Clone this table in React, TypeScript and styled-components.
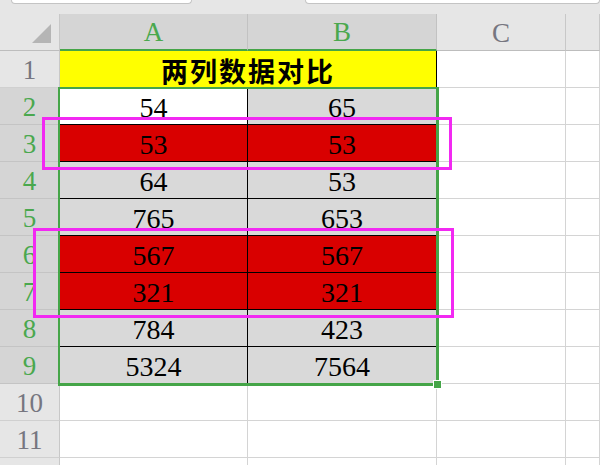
import React from "react";
import styled, { createGlobalStyle, css } from "styled-components";

const GlobalStyle = createGlobalStyle`
  html, body { margin: 0; padding: 0; background: #ffffff; }
  body { overflow: hidden; }
`;

const GREEN = "#45a548";
const MAGENTA = "#f229f2";

const Page = styled.div`
  position: relative;
  width: 600px;
  height: 465px;
  overflow: hidden;
  background: #ffffff;
  font-family: "Liberation Serif", "Noto Sans CJK SC", serif;
`;

const TopBar = styled.div`
  height: 14px;
  background: #e6e6e6;
  display: flex;
  align-items: flex-start;
  gap: 113px;
  padding-left: 11px;
  box-sizing: border-box;
`;

const FieldBox = styled.div<{ $w: number }>`
  width: ${(p) => p.$w}px;
  height: 3px;
  background: #ffffff;
  border: 1px solid #c4c4c4;
  border-top: none;
  border-radius: 0 0 5px 5px;
`;

const Sheet = styled.div`
  display: grid;
  grid-template-columns: 60px 188px 189px 129px 1fr;
  grid-auto-rows: 37px;
`;

const Corner = styled.div`
  position: relative;
  background: #e6e6e6;
  border-right: 1px solid #c8c8c8;
  border-bottom: 1px solid #bdbdbd;
  box-sizing: border-box;
  &::after {
    content: "";
    position: absolute;
    left: 32px;
    top: 10px;
    width: 19px;
    height: 19px;
    background: #b5b5b5;
    clip-path: polygon(100% 0, 100% 100%, 0 100%);
  }
`;

const headerText = css`
  display: flex;
  align-items: center;
  justify-content: center;
  font-family: "Liberation Serif", serif;
  font-size: 27px;
  box-sizing: border-box;
`;

const ColHeader = styled.div<{ $sel?: boolean }>`
  ${headerText}
  padding-top: 2px;
  background: ${(p) => (p.$sel ? "#d5d5d5" : "#e6e6e6")};
  color: ${(p) => (p.$sel ? "#4aa84e" : "#767680")};
  border-right: 1px solid ${(p) => (p.$sel ? "#c2c2c2" : "#c8c8c8")};
  border-bottom: ${(p) => (p.$sel ? `2px solid ${GREEN}` : "1px solid #bdbdbd")};
`;

const RowHeader = styled.div<{ $sel?: boolean }>`
  ${headerText}
  padding-top: 3px;
  background: ${(p) => (p.$sel ? "#d5d5d5" : "#e6e6e6")};
  color: ${(p) => (p.$sel ? "#4aa84e" : "#767680")};
  border-right: 1px solid #c8c8c8;
  border-bottom: 1px solid ${(p) => (p.$sel ? "#c4c4c4" : "#d0d0d0")};
`;

const Cell = styled.div<{ $fill?: string; $dark?: boolean }>`
  display: flex;
  align-items: center;
  justify-content: center;
  padding-top: 4px;
  box-sizing: border-box;
  font-size: 28px;
  color: #000000;
  background: ${(p) => p.$fill || "#ffffff"};
  border-right: 1px solid ${(p) => (p.$dark ? "#000000" : "#d4d4d4")};
  border-bottom: 1px solid ${(p) => (p.$dark ? "#000000" : "#d4d4d4")};
`;

const TitleCell = styled.div`
  grid-column: span 2;
  display: flex;
  align-items: center;
  justify-content: center;
  box-sizing: border-box;
  background: #ffff00;
  border-right: 1px solid #000000;
  font-family: "Noto Sans CJK SC", sans-serif;
  font-weight: 700;
  font-size: 27px;
  letter-spacing: 2px;
  padding-top: 1px;
  color: #000000;
`;

const Overlay = styled.div<{ $l: number; $t: number; $w: number; $h: number }>`
  position: absolute;
  left: ${(p) => p.$l}px;
  top: ${(p) => p.$t}px;
  width: ${(p) => p.$w}px;
  height: ${(p) => p.$h}px;
  box-sizing: border-box;
  pointer-events: none;
`;

const Selection = styled(Overlay)`
  border: 2px solid ${GREEN};
  border-right-width: 3px;
  border-bottom-width: 3px;
`;

const FillHandle = styled(Overlay)`
  background: ${GREEN};
  border: 1px solid #ffffff;
`;

const Highlight = styled(Overlay)`
  border: 3px solid ${MAGENTA};
`;

type Row = { a: string; b: string; red?: boolean };

const rows: Row[] = [
  { a: "54", b: "65" },
  { a: "53", b: "53", red: true },
  { a: "64", b: "53" },
  { a: "765", b: "653" },
  { a: "567", b: "567", red: true },
  { a: "321", b: "321", red: true },
  { a: "784", b: "423" },
  { a: "5324", b: "7564" },
];

export default function App() {
  return (
    <Page>
      <GlobalStyle />
      <TopBar>
        <FieldBox $w={184} />
        <FieldBox $w={300} />
      </TopBar>
      <Sheet>
        <Corner />
        <ColHeader $sel>A</ColHeader>
        <ColHeader $sel>B</ColHeader>
        <ColHeader>C</ColHeader>
        <ColHeader />

        <RowHeader>1</RowHeader>
        <TitleCell>两列数据对比</TitleCell>
        <Cell />
        <Cell />

        {rows.map((r, i) => {
          const idx = i + 2;
          const fill = r.red ? "#d90000" : "#d9d9d9";
          return (
            <React.Fragment key={idx}>
              <RowHeader $sel>{idx}</RowHeader>
              <Cell $dark $fill={idx === 2 ? "#ffffff" : fill}>{r.a}</Cell>
              <Cell $dark $fill={fill}>{r.b}</Cell>
              <Cell />
              <Cell />
            </React.Fragment>
          );
        })}

        {[10, 11, 12].map((n) => (
          <React.Fragment key={n}>
            <RowHeader>{n < 12 ? n : ""}</RowHeader>
            <Cell />
            <Cell />
            <Cell />
            <Cell />
          </React.Fragment>
        ))}
      </Sheet>

      <Selection $l={58} $t={87} $w={381} $h={299} />
      <FillHandle $l={433} $t={380} $w={9} $h={9} />
      <Highlight $l={42} $t={117} $w={410} $h={53} />
      <Highlight $l={33} $t={228} $w={421} $h={90} />
    </Page>
  );
}
